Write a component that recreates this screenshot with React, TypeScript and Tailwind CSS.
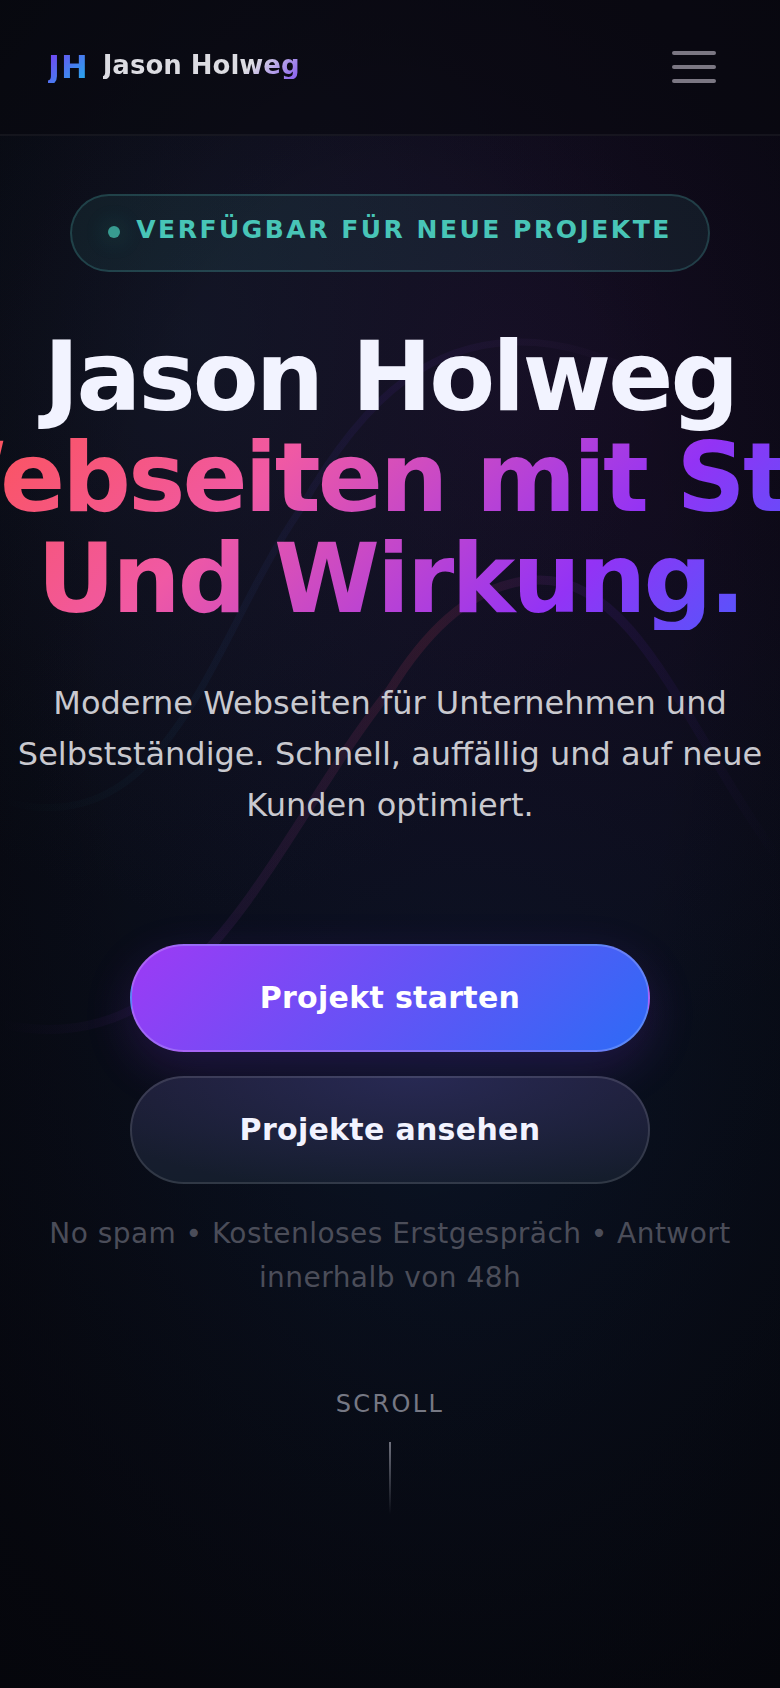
function Waves() {
  return (
    <svg
      className="absolute inset-0 h-full w-full"
      viewBox="0 0 780 1688"
      preserveAspectRatio="none"
      fill="none"
      aria-hidden="true"
    >
      <defs>
        <linearGradient id="wave-warm" x1="0" y1="0" x2="780" y2="0" gradientUnits="userSpaceOnUse">
          <stop offset="0" stopColor="#9333ff" stopOpacity="0" />
          <stop offset="0.25" stopColor="#9c3fd0" stopOpacity="0.09" />
          <stop offset="0.55" stopColor="#ff4d6d" stopOpacity="0.12" />
          <stop offset="0.78" stopColor="#7a33ff" stopOpacity="0.09" />
          <stop offset="1" stopColor="#7a33ff" stopOpacity="0" />
        </linearGradient>
        <linearGradient id="wave-cool" x1="0" y1="0" x2="780" y2="0" gradientUnits="userSpaceOnUse">
          <stop offset="0" stopColor="#2dd4bf" stopOpacity="0" />
          <stop offset="0.25" stopColor="#2d8bd4" stopOpacity="0.05" />
          <stop offset="0.5" stopColor="#7a33ff" stopOpacity="0.07" />
          <stop offset="0.7" stopColor="#9c5fd0" stopOpacity="0.04" />
          <stop offset="0.85" stopColor="#9c5fd0" stopOpacity="0" />
        </linearGradient>
      </defs>
      <path
        d="M0 1024C200 1068 270 840 390 690C430 625 480 580 540 580C640 580 690 740 780 860"
        stroke="url(#wave-warm)"
        strokeWidth="9"
      />
      <path
        d="M0 800C170 850 210 640 300 510C370 385 440 342 520 342C610 342 690 400 780 470"
        stroke="url(#wave-cool)"
        strokeWidth="7"
      />
    </svg>
  );
}

function Backdrop() {
  return (
    <div className="absolute inset-0 overflow-hidden">
      <div className="absolute inset-0 bg-[radial-gradient(ellipse_60%_34%_at_25%_20%,rgba(26,44,62,0.3),transparent),radial-gradient(ellipse_75%_40%_at_65%_23%,rgba(38,16,56,0.45),transparent),radial-gradient(ellipse_75%_40%_at_60%_65%,rgba(12,32,60,0.4),transparent)]" />
      <Waves />
      <div className="absolute inset-0 bg-[radial-gradient(ellipse_90%_72%_at_50%_40%,transparent_40%,rgba(2,3,6,0.55))]" />
    </div>
  );
}

function Header() {
  return (
    <header className="relative flex h-34 items-center justify-between border-b-2 border-white/5 bg-[#08080f]/60 pr-16 pl-12">
      <a href="#top" className="flex items-start gap-[14px] font-bold">
        <span className="bg-[linear-gradient(135deg,#7a3df5,#1cb4ea)] bg-clip-text text-[32px] leading-8 tracking-[1px] text-transparent">
          JH
        </span>
        <span className="bg-[linear-gradient(135deg,#dcdce2_72%,#8458f0)] bg-clip-text text-[26px] leading-7 text-transparent">
          Jason Holweg
        </span>
      </a>
      <button type="button" aria-label="Menü" className="flex w-11 flex-col gap-[10px]">
        <span className="h-1 rounded-full bg-[#7b7783]" />
        <span className="h-1 rounded-full bg-[#7b7783]" />
        <span className="h-1 rounded-full bg-[#7b7783]" />
      </button>
    </header>
  );
}

export default function App() {
  return (
    <div
      id="top"
      className="relative min-h-screen overflow-hidden bg-[#090a13] font-['DejaVu_Sans',sans-serif]"
    >
      <Backdrop />
      <Header />
      <main className="relative flex flex-col items-center pt-[58px] text-center">
        <div className="flex items-baseline gap-4 rounded-full border-2 border-[#5ad4cf]/20 bg-[#5ad4cf]/8 px-9 pt-5 pb-[26px]">
          <span className="size-3 rounded-full bg-[#389b90] shadow-[0_0_24px_2px_rgba(45,212,191,0.2)]" />
          <span className="text-[25px] leading-7 font-bold tracking-[0.1em] text-[#48c5b7]">
            VERFÜGBAR FÜR NEUE PROJEKTE
          </span>
        </div>

        <h1 className="mt-[55px] flex flex-col items-center text-[96px] leading-[101px] font-bold tracking-[-0.03em] whitespace-nowrap text-[#f2f3ff]">
          <span>Jason Holweg</span>
          <span className="bg-[linear-gradient(135deg,#ff5248,#f059a4_35%,#9333f5_70%,#2d6bff)] bg-clip-text text-transparent">
            Webseiten mit Stil.
            <br />
            Und Wirkung.
          </span>
        </h1>

        <p className="mt-12 text-[32px] leading-[51px] text-[#c9c9cf]">
          Moderne Webseiten für Unternehmen und Selbstständige. Schnell, auffällig und auf neue Kunden
          optimiert.
        </p>

        <div className="mt-[113px] flex w-2/3 flex-col gap-6 text-[30px] leading-10 font-bold tracking-[0.01em]">
          <a
            href="#kontakt"
            className="rounded-full border-2 border-white/20 bg-[linear-gradient(135deg,#9d3af5,#2d6bf6)] py-8 text-white shadow-[0_16px_48px_rgba(124,44,220,0.2)]"
          >
            Projekt starten
          </a>
          <a
            href="#projekte"
            className="rounded-full border-2 border-white/12 bg-[radial-gradient(ellipse_70%_110%_at_55%_0%,rgba(44,46,96,0.7),transparent),linear-gradient(#1d1d34,#141d2c)] bg-origin-border py-8 text-[#f2f3ff]"
          >
            Projekte ansehen
          </a>
        </div>

        <p className="mt-7 px-10 text-[28px] leading-11 tracking-[0.016em] text-[#4b4d59]">
          No spam • Kostenloses Erstgespräch • Antwort innerhalb von 48h
        </p>

        <div className="mt-22 flex flex-col items-center gap-[22px]">
          <span className="text-2xl tracking-[0.1em] text-[#767884]">SCROLL</span>
          <span className="h-18 w-0.5 bg-linear-to-b from-[#6e707c] to-transparent" />
        </div>
      </main>
    </div>
  );
}
